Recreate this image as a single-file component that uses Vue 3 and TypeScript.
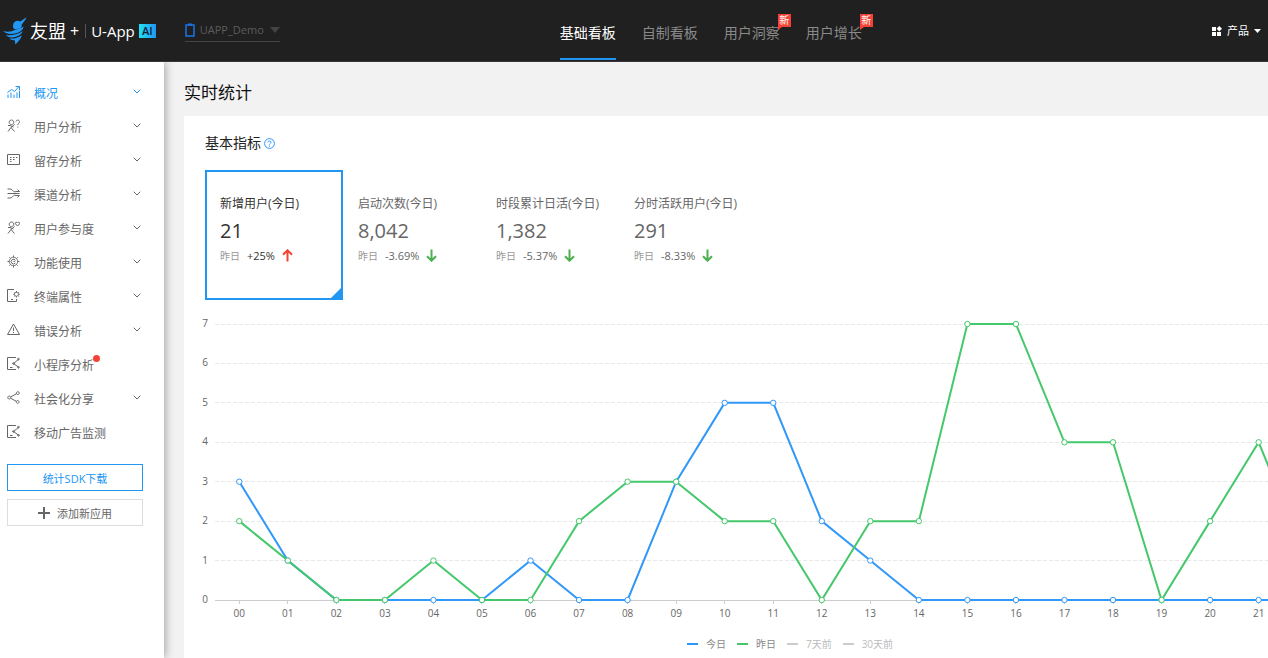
<script setup lang="ts">
import { computed, ref } from 'vue'

interface Tab { label: string; fresh?: boolean }
interface MenuItem { label: string; icon: string; expandable?: boolean; dot?: boolean }
interface Metric { label: string; value: string; change: string; up: boolean }
interface Series { name: string; color: string; shown: boolean; values: number[] }

const tabs: Tab[] = [
  { label: '基础看板' },
  { label: '自制看板' },
  { label: '用户洞察', fresh: true },
  { label: '用户增长', fresh: true },
]
const activeTab = ref(0)

const menu: MenuItem[] = [
  { label: '概况', icon: 'trend', expandable: true },
  { label: '用户分析', icon: 'userQuestion', expandable: true },
  { label: '留存分析', icon: 'calendar', expandable: true },
  { label: '渠道分析', icon: 'channel', expandable: true },
  { label: '用户参与度', icon: 'userHeart', expandable: true },
  { label: '功能使用', icon: 'gear', expandable: true },
  { label: '终端属性', icon: 'device', expandable: true },
  { label: '错误分析', icon: 'warning', expandable: true },
  { label: '小程序分析', icon: 'mini', dot: true },
  { label: '社会化分享', icon: 'share', expandable: true },
  { label: '移动广告监测', icon: 'mini' },
]
const activeMenu = ref(0)

const icons: Record<string, string> = {
  trend: 'M1 13V9.500M4 13V7.500M7 13V9.500M10 13V7.500M12.500 13V5.500M.5 7.500L4.500 4.500L7.500 6.500L12 1.500M8.500 1.500H12.500V5',
  userQuestion: 'M4.500 1A2.300 2.300 0 1 1 4.400 1ZM1 6.500H3L6.500 8M7.500 5.500L4 8.500L1 12.500M4 8.500L7.500 12.500M9 2.500C9.300.5 12.500.7 12.500 2.700C12.500 4.200 10.800 4.200 10.800 6M10.800 7.500V8.500',
  calendar: 'M.5 1.500H12.500V11.500H.5ZM3 4.500H4.500M6 4.500H7.500M9 4.500H10.500M3 6.500H4.500M6 6.500H7.500M3 8.500H4.500',
  channel: 'M.5 6.500H12.500M.5 2H3C6 2 6 6 9 4.500H12.500M.5 11H3C6 11 6 7 9 8.500H12.500M10.500 2.700L12.500 4.500M10.500 10.300L12.500 8.500',
  userHeart: 'M4.500 1A2.300 2.300 0 1 1 4.400 1ZM1 6.500H3L6.500 8M7.500 5.500L4 8.500L1 12.500M4 8.500L7.500 12.500M10.500 5L8.300 2.700C8 1 10 .8 10.500 2C11 .8 13 1 12.700 2.700Z',
  gear: 'M6.500 2.300A4.200 4.200 0 1 1 6.400 2.300ZM6.500 .5V2.300M6.500 10.700V12.500M.5 6.500H2.300M10.700 6.500H12.500M2.300 2.300L3.500 3.500M9.500 9.500L10.700 10.700M2.300 10.700L3.500 9.500M9.500 3.500L10.700 2.300M8.300 8A2.300 2.300 0 1 1 8.500 5.500M6.500 6.500H8',
  device: 'M9.500 10V12.500H.5V.5H7M4 10.500H6M9.500 3.300A2 2 0 1 1 9.400 3.300ZM9.500 2V3.300M9.500 7.300V8.500M6.300 5.300H7.500M11.500 5.300H12.800M7.500 3.200L8.200 4M10.900 6.700L11.700 7.500M11.700 3.200L10.900 4M7.500 7.500L8.200 6.700',
  warning: 'M6.500 1L12.500 11.500H.5ZM6.500 4.500V8M6.500 9V10',
  mini: 'M9 .5H.5V12.500H9M3 10.500H5.500M12 2L6.500 6.500L12 10.500M11.500 1.300A.8.8 0 1 1 11.400 1.300M6.500 5.700A.8.8 0 1 1 6.400 5.700M11.500 9.500A.8.8 0 1 1 11.400 9.500',
  share: 'M9.500 2.800L3.800 5.800M3.800 7.300L9.300 10.300M10.900 .7A1.400 1.400 0 1 1 10.800 .7ZM2.300 5A1.500 1.500 0 1 1 2.200 5ZM10.700 9.500A1.400 1.400 0 1 1 10.600 9.500Z',
}

const metrics: Metric[] = [
  { label: '新增用户(今日)', value: '21', change: '+25%', up: true },
  { label: '启动次数(今日)', value: '8,042', change: '-3.69%', up: false },
  { label: '时段累计日活(今日)', value: '1,382', change: '-5.37%', up: false },
  { label: '分时活跃用户(今日)', value: '291', change: '-8.33%', up: false },
]
const activeMetric = ref(0)

const series = ref<Series[]>([
  { name: '今日', color: '#3098f8', shown: true, values: [3, 1, 0, 0, 0, 0, 1, 0, 0, 3, 5, 5, 2, 1, 0, 0, 0, 0, 0, 0, 0, 0, 0] },
  { name: '昨日', color: '#45c86b', shown: true, values: [2, 1, 0, 0, 1, 0, 0, 2, 3, 3, 2, 2, 0, 2, 2, 7, 7, 4, 4, 0, 2, 4, 1] },
  { name: '7天前', color: '#45c8dc', shown: false, values: [] },
  { name: '30天前', color: '#f5a623', shown: false, values: [] },
])

const plot = { left: 10, top: 14, width: 1165, height: 276 }
const step = plot.width / 24
const levels = [0, 1, 2, 3, 4, 5, 6, 7]
const hours = Array.from({ length: 22 }, (_, i) => String(i).padStart(2, '0'))
const px = (i: number): number => plot.left + step * (i + 0.5)
const py = (v: number): number => plot.top + plot.height * (1 - v / 7)
const visible = computed(() =>
  series.value
    .filter((s) => s.shown && s.values.length > 0)
    .map((s) => ({
      ...s,
      dots: s.values.map((v, i) => ({ x: px(i), y: py(v) })),
      line: s.values.map((v, i) => `${px(i)},${py(v)}`).join(' '),
    })),
)
</script>

<template>
  <div class="page">
    <header class="topbar">
      <a class="brand" href="#" aria-label="友盟+ U-App AI">
        <svg class="bird" width="24" height="28" viewBox="0 0 24 28" aria-hidden="true">
          <path d="M23.500.3L22.500 2.500L18.500 8C19.500 10.500 17 12 13 12C10 13 9.500 9 10.500 6.500C11.700 3.700 15 3 17.200 4.500Z" />
          <path d="M0 14C5 15.500 9 14.500 12 12.800C15 11.800 18 11.500 20.500 9.500C20.500 13 17 15 13 16.300C8 17.800 3 17 0 14Z" />
          <path d="M3 18C8 19 14 17.800 19.800 14.300C18 18.300 13 20.500 9 20.500C6 20.500 4 19.500 3 18Z" />
          <path d="M6.500 21.500C11 22 15 21 18.800 18.200C18 22 15.500 24 12.300 27.500C12 25.500 12.300 24.500 11.500 23.200C9 23.300 7.500 22.700 6.500 21.500Z" />
        </svg>
        <span class="brand-name">友盟</span>
        <span class="brand-plus">+</span>
        <span class="brand-product">U-App</span>
        <span class="brand-ai">AI</span>
      </a>

      <label class="app-picker">
        <svg width="10" height="14" viewBox="0 0 10 14" aria-hidden="true">
          <rect x="1" y="2" width="8" height="11" fill="none" stroke="#1a73e8" stroke-width="1.500" />
          <path d="M3 1.500H7" stroke="#1a73e8" stroke-width="2" />
        </svg>
        <select aria-label="应用">
          <option>UAPP_Demo</option>
        </select>
        <svg width="10" height="6" viewBox="0 0 10 6" aria-hidden="true"><path d="M0 0H10L5 6Z" fill="#444" /></svg>
      </label>

      <nav class="tabs" aria-label="看板">
        <a
          v-for="(tab, i) in tabs"
          :key="tab.label"
          href="#"
          class="tab"
          :class="{ active: i === activeTab }"
          @click.prevent="activeTab = i"
        >
          {{ tab.label }}
          <span v-if="tab.fresh" class="fresh">新</span>
        </a>
      </nav>

      <button class="products" type="button">
        <svg width="10" height="10" viewBox="0 0 10 10" fill="#fff" aria-hidden="true">
          <path d="M0 1H4V5H0ZM0 6H4V10H0ZM5 6H9V10H5ZM7.200 0L10 2.700L7.200 5.400L4.600 2.700Z" />
        </svg>
        <span>产品</span>
        <svg width="7" height="4" viewBox="0 0 7 4" aria-hidden="true"><path d="M0 0H7L3.500 4Z" fill="#fff" /></svg>
      </button>
    </header>

    <div class="body">
      <aside class="sidebar">
        <nav class="menu" aria-label="主菜单">
          <a
            v-for="(item, i) in menu"
            :key="item.label"
            href="#"
            class="menu-item"
            :class="{ active: i === activeMenu }"
            @click.prevent="activeMenu = i"
          >
            <svg class="menu-icon" width="13" height="13" viewBox="0 0 13 13" aria-hidden="true"><path :d="icons[item.icon]" /></svg>
            <span class="menu-label">{{ item.label }}<i v-if="item.dot" class="dot"></i></span>
            <svg v-if="item.expandable" class="chevron" width="8" height="5" viewBox="0 0 8 5" aria-hidden="true"><path d="M.7.7L4 4L7.300.7" /></svg>
          </a>
        </nav>
        <div class="side-actions">
          <button class="side-button primary" type="button">统计SDK下载</button>
          <button class="side-button" type="button">
            <svg width="12" height="12" viewBox="0 0 12 12" aria-hidden="true"><path d="M6 0V12M0 6H12" stroke="#666" stroke-width="2" /></svg>
            添加新应用
          </button>
        </div>
      </aside>

      <main class="content">
        <h1>实时统计</h1>
        <section class="card">
          <h2>
            基本指标
            <svg width="11" height="11" viewBox="0 0 11 11" fill="none" stroke="#3098f8" aria-hidden="true">
              <circle cx="5.500" cy="5.500" r="4.900" />
              <path d="M3.900 4.400C4 2.400 7.100 2.500 7.100 4.300C7.100 5.400 5.500 5.300 5.500 6.700M5.500 7.600V8.600" />
            </svg>
          </h2>

          <div class="metrics">
            <button
              v-for="(m, i) in metrics"
              :key="m.label"
              type="button"
              class="metric"
              :class="{ active: i === activeMetric }"
              @click="activeMetric = i"
            >
              <span class="metric-label">{{ m.label }}</span>
              <span class="metric-value">{{ m.value }}</span>
              <span class="metric-change">
                <span class="versus">昨日</span>
                <span class="percent">{{ m.change }}</span>
                <svg class="arrow" :class="m.up ? 'up' : 'down'" width="11" height="13" viewBox="0 0 11 13" aria-hidden="true">
                  <path :d="m.up ? 'M5.500 12.500V1.500M1 5.800L5.500 1.300L10 5.800' : 'M5.500 .5V11.500M1 7.200L5.500 11.700L10 7.200'" />
                </svg>
              </span>
            </button>
          </div>

          <div class="chart">
            <svg class="plot" width="1180" height="316" role="img" aria-label="新增用户">
              <g v-for="v in levels" :key="v">
                <line v-if="v > 0" class="grid" :x1="plot.left" :x2="plot.left + plot.width" :y1="Math.floor(py(v)) + 0.5" :y2="Math.floor(py(v)) + 0.5" />
                <text class="tick-text" text-anchor="end" x="3" :y="py(v) + 3">{{ v }}</text>
              </g>
              <line class="axis" :x1="plot.left" :x2="plot.left + plot.width" :y1="plot.top + plot.height + 0.5" :y2="plot.top + plot.height + 0.5" />
              <g v-for="(h, i) in hours" :key="h">
                <line class="axis" :x1="Math.floor(px(i)) + 0.5" :x2="Math.floor(px(i)) + 0.5" :y1="plot.top + plot.height" :y2="plot.top + plot.height + 4" />
                <text class="tick-text" text-anchor="middle" :x="px(i)" :y="plot.top + plot.height + 17">{{ h }}</text>
              </g>
              <g v-for="s in visible" :key="s.name" :stroke="s.color">
                <polyline class="line" :points="s.line" />
                <circle v-for="(d, i) in s.dots" :key="i" class="point" :cx="d.x" :cy="d.y" r="2.700" />
              </g>
            </svg>
            <div class="legend">
              <button
                v-for="s in series"
                :key="s.name"
                type="button"
                class="legend-item"
                :class="{ off: !s.shown }"
                @click="s.shown = !s.shown"
              >
                <i class="swatch" :style="{ background: s.shown ? s.color : '#ccc' }"></i>{{ s.name }}
              </button>
            </div>
          </div>
        </section>
      </main>
    </div>
  </div>
</template>

<style>
body {
  margin: 0;
  overflow-x: hidden;
}
</style>

<style scoped>
.page {
  min-height: 100vh;
  display: flex;
  flex-direction: column;
  font-family: "Open Sans", "Noto Sans CJK SC", sans-serif;
  font-size: 12px;
  color: #666;
  background: #f2f2f2;
  overflow: hidden;
}
button,
select {
  font: inherit;
  color: inherit;
  background: none;
  border: 0;
  padding: 0;
  margin: 0;
  cursor: pointer;
}
a {
  color: inherit;
  text-decoration: none;
}
.topbar {
  position: relative;
  z-index: 2;
  display: flex;
  align-items: center;
  height: 61px;
  padding: 0 7px 0 3px;
  background: #202020;
  border-bottom: 1px solid #3a3539;
}
.brand {
  display: flex;
  align-items: center;
  color: #fff;
  line-height: 20px;
}
.bird {
  fill: #2196f3;
}
.brand-name {
  margin-left: 3px;
  font-size: 18px;
  font-weight: 400;
}
.brand-plus {
  padding: 0 6px 0 4px;
  border-right: 1px solid #555;
  font-size: 16px;
  line-height: 14px;
}
.brand-product {
  margin-left: 5px;
  font-size: 15px;
}
.brand-ai {
  margin-left: 4px;
  width: 17px;
  height: 14px;
  font-size: 11px;
  font-weight: 600;
  line-height: 14px;
  text-align: center;
  color: #123;
  background: linear-gradient(90deg, #21e0f3, #2196f3);
}
.app-picker {
  display: flex;
  align-items: center;
  gap: 5px;
  width: 95px;
  height: 21px;
  margin-left: 29px;
  border-bottom: 1px solid #444;
  color: #5c5c5c;
}
.app-picker select {
  flex: 1;
  min-width: 0;
  appearance: none;
  font-size: 11px;
  line-height: 18px;
}
.tabs {
  display: flex;
  align-self: stretch;
  gap: 26px;
  margin-left: 280px;
}
.tab {
  position: relative;
  box-sizing: border-box;
  height: 60px;
  padding-top: 23px;
  border-bottom: 2px solid transparent;
  font-size: 14px;
  line-height: 20px;
  color: #8a8a8a;
  white-space: nowrap;
}
.tab.active {
  color: #fff;
  border-color: #2196f3;
}
.fresh {
  position: absolute;
  left: 100%;
  top: 14px;
  width: 13px;
  height: 13px;
  margin-left: -2px;
  font-size: 10px;
  line-height: 13px;
  text-align: center;
  color: #fff;
  background: #f44336;
}
.fresh::after {
  content: "";
  position: absolute;
  left: 0;
  top: 13px;
  border-top: 3px solid #f44336;
  border-right: 4px solid transparent;
}
.products {
  display: flex;
  align-items: center;
  gap: 5px;
  margin-left: auto;
  font-size: 11px;
  line-height: 16px;
  color: #fff;
}
.body {
  flex: 1;
  display: flex;
}
.sidebar {
  position: relative;
  z-index: 1;
  flex: none;
  box-sizing: border-box;
  width: 164px;
  padding-top: 14px;
  background: #fff;
  box-shadow: 1px 0 9px rgba(0, 0, 0, 0.35);
}
.menu {
  display: flex;
  flex-direction: column;
}
.menu-item {
  display: flex;
  align-items: center;
  height: 34px;
  padding: 0 23px 0 7px;
}
.menu-item.active {
  color: #2196f3;
}
.menu-icon {
  margin-bottom: 3px;
  fill: none;
  stroke: currentColor;
}
.menu-label {
  position: relative;
  margin-left: 14px;
  padding-top: 2px;
  line-height: 18px;
}
.dot {
  position: absolute;
  right: -6px;
  top: 0;
  width: 7px;
  height: 7px;
  border-radius: 50%;
  background: #f44336;
}
.chevron {
  margin: 0 0 3px auto;
  fill: none;
  stroke: currentColor;
}
.side-actions {
  display: flex;
  flex-direction: column;
  gap: 8px;
  padding: 14px 21px 0 7px;
}
.side-button {
  display: flex;
  align-items: center;
  justify-content: center;
  gap: 7px;
  height: 27px;
  border: 1px solid #ddd;
  font-size: 11px;
}
.side-button.primary {
  border-color: #2196f3;
  color: #2196f3;
}
.content {
  flex: 1;
  min-width: 0;
  display: flex;
  flex-direction: column;
  padding-left: 20px;
}
h1 {
  margin: 0;
  padding: 19px 0 11px;
  font-size: 17px;
  font-weight: 400;
  line-height: 24px;
  color: #111;
}
.card {
  flex: 1;
  padding: 17px 0 0 21px;
  background: #fff;
  overflow: hidden;
}
h2 {
  display: flex;
  align-items: center;
  gap: 3px;
  margin: 0;
  font-size: 14px;
  font-weight: 400;
  line-height: 20px;
  color: #222;
}
.metrics {
  display: flex;
  margin-top: 17px;
}
.metric {
  position: relative;
  box-sizing: border-box;
  display: flex;
  flex-direction: column;
  width: 138px;
  height: 130px;
  padding: 23px 0 0 13px;
  border: 2px solid transparent;
  text-align: left;
  white-space: nowrap;
}
.metric.active {
  border-color: #2196f3;
  color: #333;
}
.metric.active::after {
  content: "";
  position: absolute;
  right: 0;
  bottom: 0;
  border-left: 10px solid transparent;
  border-bottom: 10px solid #2196f3;
}
.metric-label {
  line-height: 18px;
}
.metric-value {
  margin-top: 4px;
  font-size: 20px;
  line-height: 28px;
}
.metric-change {
  display: flex;
  align-items: center;
  margin-top: 3px;
  line-height: 16px;
}
.versus {
  font-size: 10px;
  color: #999;
}
.percent {
  margin-left: 7px;
  font-size: 11px;
}
.arrow {
  margin: 0 0 2px 7px;
  fill: none;
  stroke-width: 2;
}
.arrow.up {
  stroke: #f44336;
}
.arrow.down {
  stroke: #4caf50;
}
.chart {
  width: 1170px;
  margin-top: 10px;
}
.plot {
  display: block;
  overflow: visible;
}
.grid {
  stroke: #e8e8e8;
  stroke-dasharray: 4 2;
}
.axis {
  stroke: #ccc;
}
.tick-text {
  font-size: 10px;
  fill: #666;
}
.line {
  fill: none;
  stroke-width: 2;
}
.point {
  fill: #fff;
  stroke-width: 1;
}
.legend {
  display: flex;
  justify-content: center;
  gap: 11px;
  padding: 10px 0 6px;
}
.legend-item {
  display: flex;
  align-items: center;
  gap: 8px;
  font-size: 10px;
  line-height: 16px;
  color: #888;
}
.legend-item.off {
  color: #bbb;
}
.swatch {
  width: 11px;
  height: 2px;
}
</style>
